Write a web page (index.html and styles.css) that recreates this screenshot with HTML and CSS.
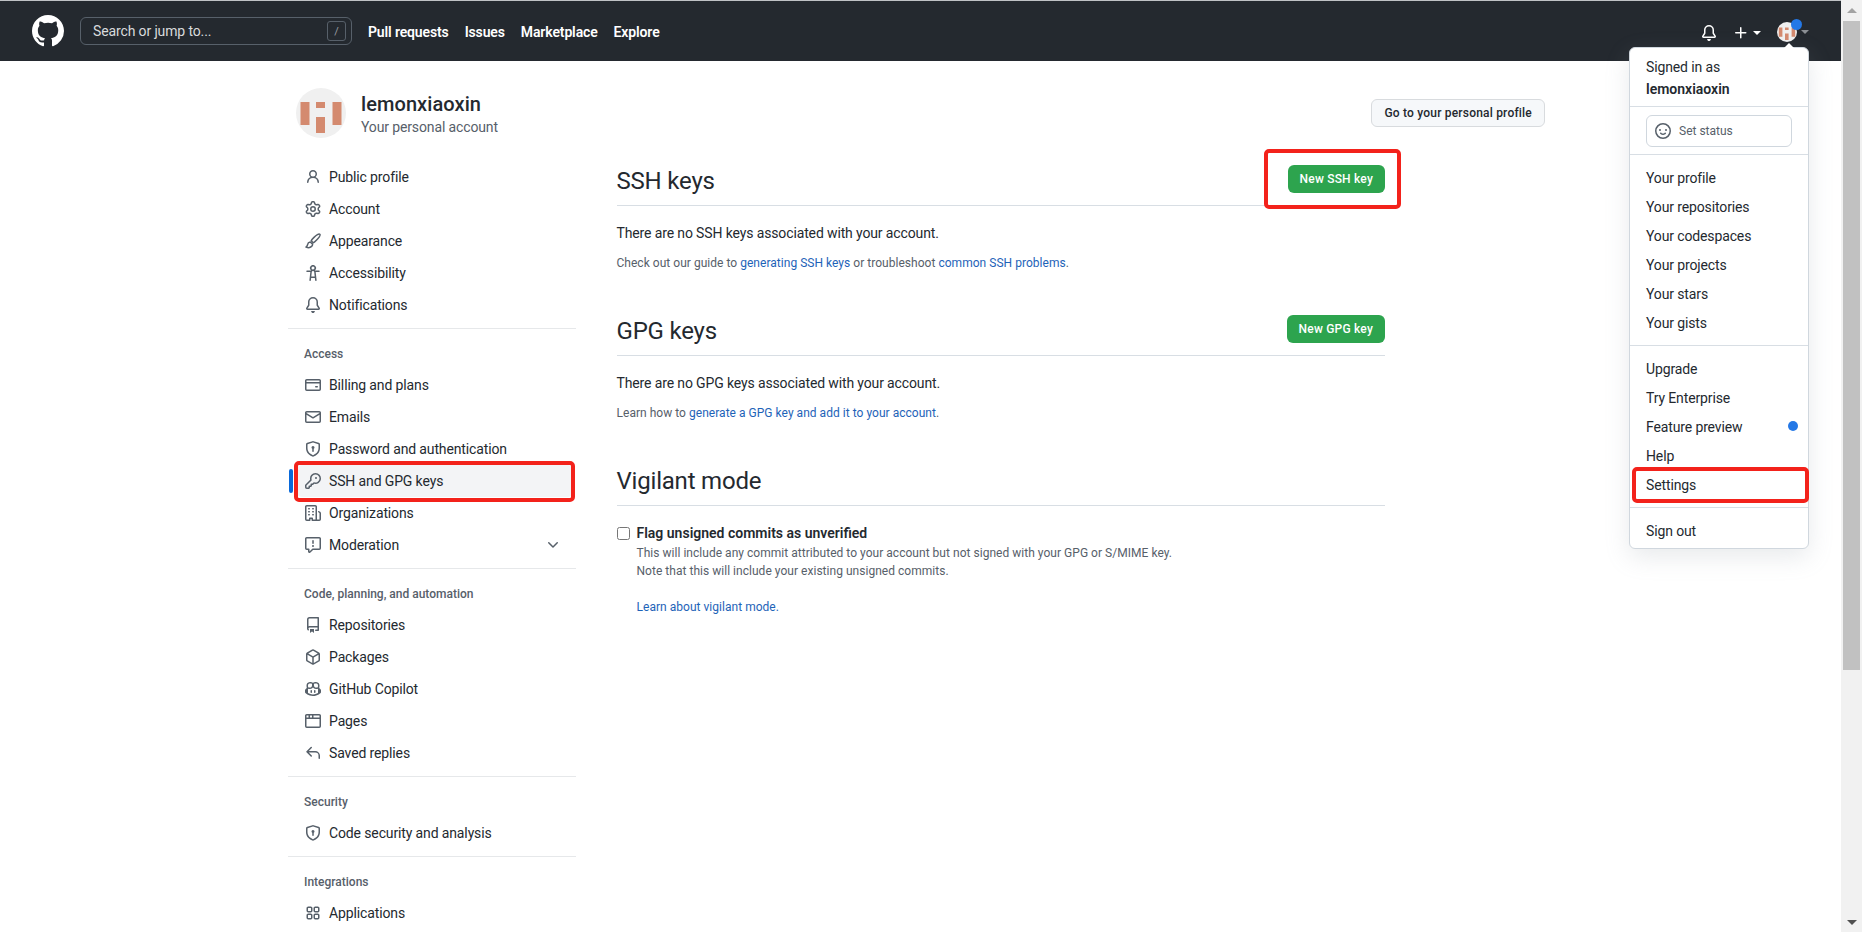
FILE: index.html
```html
<!DOCTYPE html>
<html lang="en">
<head>
    <meta charset="UTF-8">
    <title>SSH and GPG keys</title>
    <link rel="stylesheet" href="styles.css">
</head>
<body>

<svg class="sprite" xmlns="http://www.w3.org/2000/svg">
    <symbol id="i-mark" viewBox="0 0 16 16"><path d="M8 0C3.58 0 0 3.58 0 8c0 3.54 2.29 6.53 5.47 7.59.4.07.55-.17.55-.38 0-.19-.01-.82-.01-1.49-2.01.37-2.53-.49-2.69-.94-.09-.23-.48-.94-.82-1.13-.28-.15-.68-.52-.01-.53.63-.01 1.08.58 1.23.82.72 1.21 1.87.87 2.33.66.07-.52.28-.87.51-1.07-1.78-.2-3.64-.89-3.64-3.95 0-.87.31-1.59.82-2.15-.08-.2-.36-1.02.08-2.12 0 0 .67-.21 2.2.82.64-.18 1.32-.27 2-.27.68 0 1.36.09 2 .27 1.53-1.04 2.2-.82 2.2-.82.44 1.1.16 1.92.08 2.12.51.56.82 1.27.82 2.15 0 3.07-1.87 3.75-3.65 3.95.29.25.54.73.54 1.48 0 1.07-.01 1.93-.01 2.2 0 .21.15.46.55.38A8.013 8.013 0 0016 8c0-4.42-3.58-8-8-8z"/></symbol>
    <symbol id="i-bell" viewBox="0 0 16 16"><path d="M8 16c.9 0 1.7-.6 1.9-1.5.1-.3-.1-.5-.4-.5h-3c-.3 0-.5.2-.4.5.2.9 1 1.5 1.9 1.5ZM3 5a5 5 0 0 1 10 0v2.947c0 .05.015.098.042.139l1.703 2.555A1.519 1.519 0 0 1 13.482 13H2.518a1.516 1.516 0 0 1-1.263-2.36l1.703-2.554A.255.255 0 0 0 3 7.947Zm5-3.5A3.5 3.5 0 0 0 4.5 5v2.947c0 .346-.102.683-.294.97l-1.703 2.556a.017.017 0 0 0-.003.01l.001.006c0 .002.002.004.004.006l.006.004.007.001h10.964l.007-.001.006-.004.004-.006.001-.007a.017.017 0 0 0-.003-.01l-1.703-2.554a1.745 1.745 0 0 1-.294-.97V5A3.5 3.5 0 0 0 8 1.5Z"/></symbol>
    <symbol id="i-plus" viewBox="0 0 16 16"><path d="M7.75 2a.75.75 0 0 1 .75.75V7h4.25a.75.75 0 0 1 0 1.5H8.5v4.25a.75.75 0 0 1-1.5 0V8.5H2.75a.75.75 0 0 1 0-1.5H7V2.75A.75.75 0 0 1 7.75 2Z"/></symbol>
    <symbol id="i-person" viewBox="0 0 16 16"><path d="M10.561 8.073a6.005 6.005 0 0 1 3.432 5.142.75.75 0 1 1-1.498.07 4.5 4.5 0 0 0-8.99 0 .75.75 0 0 1-1.498-.07 6.004 6.004 0 0 1 3.431-5.142 3.999 3.999 0 1 1 5.123 0ZM10.5 5a2.5 2.5 0 1 0-5 0 2.5 2.5 0 0 0 5 0Z"/></symbol>
    <symbol id="i-gear" viewBox="0 0 16 16"><path d="M8 0a8.2 8.2 0 0 1 .701.031C9.444.095 9.99.645 10.16 1.29l.288 1.107c.018.066.079.158.212.224.231.114.454.243.668.386.123.082.233.09.299.071l1.103-.303c.644-.176 1.392.021 1.82.63.27.385.506.792.704 1.218.315.675.111 1.422-.364 1.891l-.814.806c-.049.048-.098.147-.088.294.016.257.016.515 0 .772-.01.147.038.246.088.294l.814.806c.475.469.679 1.216.364 1.891a7.977 7.977 0 0 1-.704 1.217c-.428.61-1.176.807-1.82.63l-1.102-.302c-.067-.019-.177-.011-.3.071a5.909 5.909 0 0 1-.668.386c-.133.066-.194.158-.211.224l-.29 1.106c-.168.646-.715 1.196-1.458 1.26a8.006 8.006 0 0 1-1.402 0c-.743-.064-1.289-.614-1.458-1.26l-.289-1.106c-.018-.066-.079-.158-.212-.224a5.738 5.738 0 0 1-.668-.386c-.123-.082-.233-.09-.299-.071l-1.103.303c-.644.176-1.392-.021-1.82-.63a8.12 8.12 0 0 1-.704-1.218c-.315-.675-.111-1.422.363-1.891l.815-.806c.05-.048.098-.147.088-.294a6.214 6.214 0 0 1 0-.772c.01-.147-.038-.246-.088-.294l-.815-.806C.635 6.045.431 5.298.746 4.623a7.92 7.92 0 0 1 .704-1.217c.428-.61 1.176-.807 1.82-.63l1.102.302c.067.019.177.011.3-.071.214-.143.437-.272.668-.386.133-.066.194-.158.211-.224l.29-1.106C6.009.645 6.556.095 7.299.03 7.53.01 7.764 0 8 0Zm-.571 1.525c-.036.003-.108.036-.137.146l-.289 1.105c-.147.561-.549.967-.998 1.189-.173.086-.34.183-.5.29-.417.278-.97.423-1.529.27l-1.103-.303c-.109-.03-.175.016-.195.045-.22.312-.412.644-.573.99-.014.031-.021.11.059.19l.815.806c.411.406.562.957.53 1.456a4.709 4.709 0 0 0 0 .582c.032.499-.119 1.05-.53 1.456l-.815.806c-.081.08-.073.159-.059.19.162.346.353.677.573.989.02.03.085.076.195.046l1.102-.303c.56-.153 1.113-.008 1.53.27.161.107.328.204.501.29.447.222.85.629.997 1.189l.289 1.105c.029.109.101.143.137.146a6.6 6.6 0 0 0 1.142 0c.036-.003.108-.036.137-.146l.289-1.105c.147-.561.549-.967.998-1.189.173-.086.34-.183.5-.29.417-.278.97-.423 1.529-.27l1.103.303c.109.029.175-.016.195-.045.22-.313.411-.644.573-.99.014-.031.021-.11-.059-.19l-.815-.806c-.411-.406-.562-.957-.53-1.456a4.709 4.709 0 0 0 0-.582c-.032-.499.119-1.05.53-1.456l.815-.806c.081-.08.073-.159.059-.19a6.464 6.464 0 0 0-.573-.989c-.02-.03-.085-.076-.195-.046l-1.102.303c-.56.153-1.113.008-1.53-.27a4.44 4.44 0 0 0-.501-.29c-.447-.222-.85-.629-.997-1.189l-.289-1.105c-.029-.11-.101-.143-.137-.146a6.6 6.6 0 0 0-1.142 0ZM11 8a3 3 0 1 1-6 0 3 3 0 0 1 6 0ZM9.5 8a1.5 1.5 0 1 0-3.001.001A1.5 1.5 0 0 0 9.5 8Z"/></symbol>
    <symbol id="i-brush" viewBox="0 0 16 16"><path fill="none" stroke="currentColor" stroke-width="1.5" stroke-linejoin="round" d="M14.8 1.2c-.9-.9-3.5.9-5.8 3.2C7.5 5.900 6.600 7 6.200 7.800l2 2c.8-.4 1.900-1.300 3.400-2.800 2.300-2.300 4.100-4.900 3.200-5.800Z"/><path fill="none" stroke="currentColor" stroke-width="1.5" stroke-linejoin="round" d="M5.2 9c-1.500.2-2.400 1.200-2.600 2.600-.1.900-.5 1.600-1.600 2.400 1.800.8 4.400.6 5.600-.6.900-.9 1.100-1.900.8-2.600Z"/></symbol>
    <symbol id="i-access" viewBox="0 0 16 16"><path d="M9.923 5.302c.063.063.122.129.178.198H14A.75.75 0 0 1 14 7h-3.3l.578 5.163.362 2.997a.75.75 0 0 1-1.49.18L9.868 13H6.132l-.282 2.34a.75.75 0 0 1-1.49-.18l.362-2.997L5.3 7H2a.75.75 0 0 1 0-1.5h3.9a2.54 2.54 0 0 1 .176-.198 3 3 0 1 1 3.847 0ZM9.2 7.073h-.001a1.206 1.206 0 0 0-2.398 0L6.305 11.5h3.39ZM9.5 3a1.5 1.5 0 1 0-3.001.001A1.5 1.5 0 0 0 9.5 3Z"/></symbol>
    <symbol id="i-card" viewBox="0 0 16 16"><path d="M10.75 9a.75.75 0 0 0 0 1.5h1.5a.75.75 0 0 0 0-1.5h-1.5Z"/><path d="M0 3.75C0 2.784.784 2 1.75 2h12.5c.966 0 1.75.784 1.75 1.75v8.5A1.75 1.75 0 0 1 14.25 14H1.75A1.75 1.75 0 0 1 0 12.25ZM14.5 6.5h-13v5.75c0 .138.112.25.25.25h12.5a.25.25 0 0 0 .25-.25Zm0-2.75a.25.25 0 0 0-.25-.25H1.75a.25.25 0 0 0-.25.25V5h13Z"/></symbol>
    <symbol id="i-mail" viewBox="0 0 16 16"><path d="M1.75 2h12.5c.966 0 1.75.784 1.75 1.75v8.5A1.75 1.75 0 0 1 14.25 14H1.75A1.75 1.75 0 0 1 0 12.25v-8.5C0 2.784.784 2 1.75 2ZM1.5 12.251c0 .138.112.25.25.25h12.5a.25.25 0 0 0 .25-.25V5.809L8.38 9.397a.75.75 0 0 1-.76 0L1.5 5.809v6.442Zm13-8.181v-.32a.25.25 0 0 0-.25-.25H1.75a.25.25 0 0 0-.25.25v.32L8 7.88l6.5-3.81Z"/></symbol>
    <symbol id="i-shield" viewBox="0 0 16 16"><path d="M7.467.133a1.748 1.748 0 0 1 1.066 0l5.25 1.68A1.75 1.75 0 0 1 15 3.48V7c0 1.566-.32 3.182-1.303 4.682-.983 1.498-2.585 2.813-5.032 3.855a1.697 1.697 0 0 1-1.33 0c-2.447-1.042-4.049-2.357-5.032-3.855C1.32 10.182 1 8.566 1 7V3.48a1.75 1.75 0 0 1 1.217-1.667Zm.61 1.429a.25.25 0 0 0-.153 0l-5.25 1.68a.25.25 0 0 0-.174.238V7c0 1.358.275 2.666 1.057 3.86.784 1.194 2.121 2.34 4.366 3.297a.196.196 0 0 0 .154 0c2.245-.956 3.582-2.104 4.366-3.298C13.225 9.666 13.5 8.36 13.5 7V3.48a.251.251 0 0 0-.174-.237l-5.25-1.68ZM9.5 6.5c0 .536-.286 1.032-.75 1.3v2.45a.75.75 0 0 1-1.5 0V7.8A1.5 1.5 0 1 1 9.5 6.5Z"/></symbol>
    <symbol id="i-key" viewBox="0 0 16 16"><path d="M10.5 0a5.499 5.499 0 1 1-1.288 10.848l-.932.932a.749.749 0 0 1-.53.22H7v.75a.749.749 0 0 1-.22.53l-.5.5a.749.749 0 0 1-.53.22H5v.75a.749.749 0 0 1-.22.53l-.5.5a.749.749 0 0 1-.53.22h-2A1.75 1.75 0 0 1 0 14.25v-2c0-.199.079-.389.22-.53l4.932-4.932A5.5 5.5 0 0 1 10.5 0Zm-4 5.5c-.001.431.069.86.205 1.269a.75.75 0 0 1-.181.768L1.5 12.56v1.69c0 .138.112.25.25.25h1.69l.06-.06v-1.19a.75.75 0 0 1 .75-.75h1.19l.06-.06v-1.19a.75.75 0 0 1 .75-.75h1.19l1.023-1.025a.75.75 0 0 1 .768-.18A4 4 0 1 0 6.5 5.5ZM11 6a1 1 0 1 1 0-2 1 1 0 0 1 0 2Z"/></symbol>
    <symbol id="i-org" viewBox="0 0 16 16"><path d="M1.75 16A1.75 1.75 0 0 1 0 14.25V1.75C0 .784.784 0 1.75 0h8.5C11.216 0 12 .784 12 1.75v12.5c0 .085-.006.168-.018.25h2.268a.25.25 0 0 0 .25-.25V8.285a.25.25 0 0 0-.111-.208l-1.055-.703a.749.749 0 1 1 .832-1.248l1.055.703c.487.325.779.871.779 1.456v5.965A1.75 1.75 0 0 1 14.25 16h-3.5a.766.766 0 0 1-.197-.026c-.099.017-.2.026-.303.026h-3a.75.75 0 0 1-.75-.75V14h-1v1.25a.75.75 0 0 1-.75.75Zm-.25-1.75c0 .138.112.25.25.25H4v-1.25a.75.75 0 0 1 .75-.75h2.5a.75.75 0 0 1 .75.75v1.25h2.25a.25.25 0 0 0 .25-.25V1.75a.25.25 0 0 0-.25-.25h-8.5a.25.25 0 0 0-.25.25ZM3.75 6h.5a.75.75 0 0 1 0 1.5h-.5a.75.75 0 0 1 0-1.5ZM3 3.75A.75.75 0 0 1 3.75 3h.5a.75.75 0 0 1 0 1.5h-.5A.75.75 0 0 1 3 3.75Zm4 3A.75.75 0 0 1 7.75 6h.5a.75.75 0 0 1 0 1.5h-.5A.75.75 0 0 1 7 6.75ZM7.75 3h.5a.75.75 0 0 1 0 1.5h-.5a.75.75 0 0 1 0-1.5ZM3 9.75A.75.75 0 0 1 3.75 9h.5a.75.75 0 0 1 0 1.5h-.5A.75.75 0 0 1 3 9.75ZM7.75 9h.5a.75.75 0 0 1 0 1.5h-.5a.75.75 0 0 1 0-1.5Z"/></symbol>
    <symbol id="i-report" viewBox="0 0 16 16"><path d="M0 1.75C0 .784.784 0 1.750 0h12.5C15.216 0 16 .784 16 1.75v9.5A1.75 1.75 0 0 1 14.25 13H8.06l-2.573 2.573A1.458 1.458 0 0 1 3 14.543V13H1.75A1.75 1.75 0 0 1 0 11.25Zm1.75-.25a.25.25 0 0 0-.25.25v9.5c0 .138.112.25.25.25h2a.75.75 0 0 1 .75.75v2.19l2.72-2.72a.749.749 0 0 1 .53-.22h6.5a.25.25 0 0 0 .25-.25v-9.5a.25.25 0 0 0-.25-.25Zm7 2.25v2.5a.75.75 0 0 1-1.5 0v-2.5a.75.75 0 0 1 1.5 0ZM9 9a1 1 0 1 1-2 0 1 1 0 0 1 2 0Z"/></symbol>
    <symbol id="i-chevron" viewBox="0 0 16 16"><path d="M12.78 5.22a.749.749 0 0 1 0 1.06l-4.25 4.25a.749.749 0 0 1-1.06 0L3.22 6.28a.749.749 0 1 1 1.06-1.06L8 8.939l3.72-3.719a.749.749 0 0 1 1.06 0Z"/></symbol>
    <symbol id="i-repo" viewBox="0 0 16 16"><path d="M2 2.5A2.5 2.5 0 0 1 4.5 0h8.75a.75.75 0 0 1 .75.75v12.5a.75.75 0 0 1-.75.75h-2.5a.75.75 0 0 1 0-1.5h1.75v-2h-8a1 1 0 0 0-.714 1.7.75.75 0 1 1-1.072 1.05A2.495 2.495 0 0 1 2 11.5Zm10.5-1h-8a1 1 0 0 0-1 1v6.708A2.486 2.486 0 0 1 4.5 9h8ZM5 12.25a.25.25 0 0 1 .25-.25h3.5a.25.25 0 0 1 .25.25v3.25a.25.25 0 0 1-.4.2l-1.45-1.087a.249.249 0 0 0-.3 0L5.4 15.7a.25.25 0 0 1-.4-.2Z"/></symbol>
    <symbol id="i-package" viewBox="0 0 16 16"><path d="m8.878.392 5.25 3.045c.54.314.872.89.872 1.514v6.098a1.75 1.75 0 0 1-.872 1.514l-5.25 3.045a1.75 1.75 0 0 1-1.756 0l-5.25-3.045A1.75 1.75 0 0 1 1 11.049V4.951c0-.624.332-1.201.872-1.514L7.122.392a1.75 1.75 0 0 1 1.756 0ZM7.875 1.69l-4.63 2.685L8 7.133l4.755-2.758-4.63-2.685a.248.248 0 0 0-.25 0ZM2.5 5.677v5.372c0 .09.047.171.125.216l4.625 2.683V8.432Zm6.25 8.271 4.625-2.683a.25.25 0 0 0 .125-.216V5.677L8.75 8.432Z"/></symbol>
    <symbol id="i-copilot" viewBox="0 0 16 16"><path d="M7.998 15.035c-4.562 0-7.873-2.914-7.998-3.749V9.338c.085-.628.677-1.686 1.588-2.065.013-.07.024-.143.036-.218.029-.183.06-.384.126-.612-.201-.508-.254-1.084-.254-1.656 0-.87.128-1.769.693-2.484.579-.733 1.494-1.124 2.724-1.261 1.206-.134 2.262.034 2.944.765.05.053.096.108.139.165.044-.057.094-.112.143-.165.682-.731 1.738-.899 2.944-.765 1.23.137 2.145.528 2.724 1.261.566.715.693 1.614.693 2.484 0 .572-.053 1.148-.254 1.656.066.228.098.429.126.612.012.076.024.148.037.218.924.385 1.522 1.471 1.591 2.095v1.872c0 .766-3.351 3.795-8.002 3.795Zm0-1.485c2.28 0 4.584-1.11 5.002-1.433V7.862l-.023-.116c-.49.21-1.075.291-1.727.291-1.146 0-2.059-.327-2.71-.991A3.222 3.222 0 0 1 8 6.303a3.24 3.24 0 0 1-.544.743c-.65.664-1.563.991-2.71.991-.652 0-1.236-.081-1.727-.291l-.023.116v4.255c.419.323 2.722 1.433 5.002 1.433ZM6.762 2.83c-.193-.206-.637-.413-1.682-.297-1.019.113-1.479.404-1.713.7-.247.312-.369.789-.369 1.554 0 .793.129 1.171.308 1.371.162.181.519.379 1.442.379.853 0 1.339-.235 1.638-.54.315-.322.527-.827.617-1.553.117-.935-.037-1.395-.241-1.614Zm4.155-.297c-1.044-.116-1.488.091-1.681.297-.204.219-.359.679-.242 1.614.091.726.303 1.231.618 1.553.299.305.784.54 1.638.54.922 0 1.28-.198 1.442-.379.179-.2.308-.578.308-1.371 0-.765-.123-1.242-.37-1.554-.233-.296-.693-.587-1.713-.7Z"/><path d="M6.25 9.037a.75.75 0 0 1 .75.75v1.501a.75.75 0 0 1-1.5 0V9.787a.75.75 0 0 1 .75-.75Zm4.25.75v1.501a.75.75 0 0 1-1.5 0V9.787a.75.75 0 0 1 1.5 0Z"/></symbol>
    <symbol id="i-browser" viewBox="0 0 16 16"><path d="M0 2.75C0 1.784.784 1 1.75 1h12.5c.966 0 1.75.784 1.75 1.75v10.5A1.75 1.75 0 0 1 14.25 15H1.75A1.75 1.75 0 0 1 0 13.25ZM14.5 6h-13v7.25c0 .138.112.25.25.25h12.5a.25.25 0 0 0 .25-.25Zm-6-3.5v2h6V2.75a.25.25 0 0 0-.25-.25ZM5 2.5v2h2v-2Zm-3.25 0a.25.25 0 0 0-.25.25V4.5h2v-2Z"/></symbol>
    <symbol id="i-reply" viewBox="0 0 16 16"><path d="M6.78 1.97a.75.75 0 0 1 0 1.06L3.81 6h6.44A4.75 4.75 0 0 1 15 10.75v2.5a.75.75 0 0 1-1.5 0v-2.5a3.25 3.25 0 0 0-3.25-3.25H3.81l2.97 2.97a.749.749 0 0 1-.326 1.275.749.749 0 0 1-.734-.215L1.47 7.28a.75.75 0 0 1 0-1.06l4.25-4.25a.75.75 0 0 1 1.06 0Z"/></symbol>
    <symbol id="i-apps" viewBox="0 0 16 16"><path d="M1.5 3.25c0-.966.784-1.75 1.75-1.75h2.5c.966 0 1.75.784 1.75 1.75v2.5A1.75 1.75 0 0 1 5.75 7.5h-2.5A1.75 1.75 0 0 1 1.5 5.75Zm7 0c0-.966.784-1.75 1.75-1.75h2.5c.966 0 1.75.784 1.75 1.75v2.5a1.75 1.75 0 0 1-1.75 1.75h-2.5A1.75 1.75 0 0 1 8.5 5.75Zm-7 7c0-.966.784-1.75 1.75-1.75h2.5c.966 0 1.75.784 1.75 1.75v2.5a1.75 1.75 0 0 1-1.75 1.75h-2.5a1.75 1.75 0 0 1-1.75-1.75Zm7 0c0-.966.784-1.75 1.75-1.75h2.5c.966 0 1.75.784 1.75 1.75v2.5a1.75 1.75 0 0 1-1.75 1.75h-2.5a1.75 1.75 0 0 1-1.75-1.75ZM3.25 3a.25.25 0 0 0-.25.25v2.5c0 .138.112.25.25.25h2.5A.25.25 0 0 0 6 5.75v-2.5A.25.25 0 0 0 5.75 3Zm7 0a.25.25 0 0 0-.25.25v2.5c0 .138.112.25.25.25h2.5a.25.25 0 0 0 .25-.25v-2.5a.25.25 0 0 0-.25-.25ZM3.25 10a.25.25 0 0 0-.25.25v2.5c0 .138.112.25.25.25h2.5a.25.25 0 0 0 .25-.25v-2.5a.25.25 0 0 0-.25-.25Zm7 0a.25.25 0 0 0-.25.25v2.5c0 .138.112.25.25.25h2.5a.25.25 0 0 0 .25-.25v-2.5a.25.25 0 0 0-.25-.25Z"/></symbol>
    <symbol id="i-smiley" viewBox="0 0 16 16"><path d="M8 0a8 8 0 1 1 0 16A8 8 0 0 1 8 0ZM1.5 8a6.5 6.5 0 1 0 13 0 6.5 6.5 0 0 0-13 0Zm3.82 1.636a.75.75 0 0 1 1.038.175l.007.009c.103.118.22.222.35.31.264.178.683.37 1.285.37.602 0 1.02-.192 1.285-.371.13-.088.247-.192.35-.31l.007-.008a.75.75 0 0 1 1.222.87c-.02.028-.1.13-.199.232-.16.166-.338.316-.53.445-.63.418-1.37.638-2.127.629-.946 0-1.652-.308-2.126-.63a3.331 3.331 0 0 1-.715-.657.75.75 0 0 1 .153-1.094ZM12 7a1 1 0 1 1-2 0 1 1 0 0 1 2 0ZM5 8a1 1 0 1 1 0-2 1 1 0 0 1 0 2Z"/></symbol>
    <symbol id="i-avatar" viewBox="0 0 50 50">
        <circle cx="25" cy="25" r="25" fill="#f0f0f0"/>
        <path fill="#d48a6f" d="M4.5 14h9v23h-9zM20 14h9v6h-9zM20 29h9v16h-9zM36.500 14h9v23h-9z"/>
    </symbol>
</svg>

<div class="window">
    <div class="page">
        <header class="topbar">
            <svg class="topbar-logo"><use href="#i-mark"/></svg>
            <div class="search">
                <span>Search or jump to...</span>
                <span class="search-key">/</span>
            </div>
            <nav class="topnav">
                <a>Pull requests</a>
                <a>Issues</a>
                <a>Marketplace</a>
                <a>Explore</a>
            </nav>
            <div class="topbar-right">
                <svg class="icon-16 topbar-low"><use href="#i-bell"/></svg>
                <div class="topbar-menu topbar-low">
                    <svg class="icon-16"><use href="#i-plus"/></svg>
                    <span class="caret"></span>
                </div>
                <div class="topbar-menu">
                    <div class="user-pic">
                        <svg class="user-pic-img"><use href="#i-avatar"/></svg>
                        <span class="user-dot"></span>
                    </div>
                    <span class="caret caret-dim"></span>
                </div>
            </div>
        </header>

        <div class="container">
            <div class="account">
                <div class="account-who">
                    <svg class="account-pic"><use href="#i-avatar"/></svg>
                    <div class="account-text">
                        <div class="account-name">lemonxiaoxin</div>
                        <div class="account-sub">Your personal account</div>
                    </div>
                </div>
                <a class="btn">Go to your personal profile</a>
            </div>

            <div class="columns">
                <aside class="sidebar">
                    <a class="side-item"><svg class="icon-16"><use href="#i-person"/></svg>Public profile</a>
                    <a class="side-item"><svg class="icon-16"><use href="#i-gear"/></svg>Account</a>
                    <a class="side-item"><svg class="icon-16"><use href="#i-brush"/></svg>Appearance</a>
                    <a class="side-item"><svg class="icon-16"><use href="#i-access"/></svg>Accessibility</a>
                    <a class="side-item"><svg class="icon-16"><use href="#i-bell"/></svg>Notifications</a>
                    <div class="side-rule"></div>
                    <div class="side-title">Access</div>
                    <a class="side-item"><svg class="icon-16"><use href="#i-card"/></svg>Billing and plans</a>
                    <a class="side-item"><svg class="icon-16"><use href="#i-mail"/></svg>Emails</a>
                    <a class="side-item"><svg class="icon-16"><use href="#i-shield"/></svg>Password and authentication</a>
                    <a class="side-item active"><svg class="icon-16"><use href="#i-key"/></svg>SSH and GPG keys<span class="red-box"></span></a>
                    <a class="side-item"><svg class="icon-16"><use href="#i-org"/></svg>Organizations</a>
                    <a class="side-item"><svg class="icon-16"><use href="#i-report"/></svg>Moderation<svg class="icon-16 side-chevron"><use href="#i-chevron"/></svg></a>
                    <div class="side-rule"></div>
                    <div class="side-title">Code, planning, and automation</div>
                    <a class="side-item"><svg class="icon-16"><use href="#i-repo"/></svg>Repositories</a>
                    <a class="side-item"><svg class="icon-16"><use href="#i-package"/></svg>Packages</a>
                    <a class="side-item"><svg class="icon-16"><use href="#i-copilot"/></svg>GitHub Copilot</a>
                    <a class="side-item"><svg class="icon-16"><use href="#i-browser"/></svg>Pages</a>
                    <a class="side-item"><svg class="icon-16"><use href="#i-reply"/></svg>Saved replies</a>
                    <div class="side-rule"></div>
                    <div class="side-title">Security</div>
                    <a class="side-item"><svg class="icon-16"><use href="#i-shield"/></svg>Code security and analysis</a>
                    <div class="side-rule"></div>
                    <div class="side-title">Integrations</div>
                    <a class="side-item"><svg class="icon-16"><use href="#i-apps"/></svg>Applications</a>
                </aside>

                <main class="content">
                    <section class="block">
                        <div class="block-head">
                            <h2>SSH keys</h2>
                            <a class="btn-green">New SSH key<span class="red-box"></span></a>
                        </div>
                        <p class="lead">There are no SSH keys associated with your account.</p>
                        <p class="note">Check out our guide to <a class="link">generating SSH keys</a> or troubleshoot <a class="link">common SSH problems</a>.</p>
                    </section>
                    <section class="block">
                        <div class="block-head">
                            <h2>GPG keys</h2>
                            <a class="btn-green">New GPG key</a>
                        </div>
                        <p class="lead">There are no GPG keys associated with your account.</p>
                        <p class="note">Learn how to <a class="link">generate a GPG key and add it to your account</a>.</p>
                    </section>
                    <section class="block">
                        <div class="block-head">
                            <h2>Vigilant mode</h2>
                        </div>
                        <label class="check">
                            <input type="checkbox">
                            <strong>Flag unsigned commits as unverified</strong>
                        </label>
                        <div class="check-note">
                            This will include any commit attributed to your account but not signed with your GPG or S/MIME key.<br>
                            Note that this will include your existing unsigned commits.<br>
                            <br>
                            <a class="link">Learn about vigilant mode.</a>
                        </div>
                    </section>
                </main>
            </div>
        </div>

        <div class="dropdown">
            <div class="drop-who">
                <div>Signed in as</div>
                <strong>lemonxiaoxin</strong>
            </div>
            <div class="drop-status">
                <div class="status-btn"><svg class="icon-16"><use href="#i-smiley"/></svg>Set status</div>
            </div>
            <div class="drop-list">
                <a>Your profile</a>
                <a>Your repositories</a>
                <a>Your codespaces</a>
                <a>Your projects</a>
                <a>Your stars</a>
                <a>Your gists</a>
            </div>
            <div class="drop-list">
                <a>Upgrade</a>
                <a>Try Enterprise</a>
                <a class="drop-feature">Feature preview<span class="feature-dot"></span></a>
                <a>Help</a>
                <a class="drop-settings">Settings<span class="red-box"></span></a>
            </div>
            <div class="drop-list drop-last">
                <a>Sign out</a>
            </div>
        </div>
    </div>

    <div class="scrollbar">
        <span class="scroll-up"></span>
        <div class="scroll-track"><div class="scroll-thumb"></div></div>
        <span class="scroll-down"></span>
    </div>
</div>

</body>
</html>
```
FILE: styles.css
```css
* {
    box-sizing: border-box;
}

body {
    margin: 0;
    height: 100vh;
    overflow: hidden;
    font-family: Roboto, "Liberation Sans", sans-serif;
    font-size: 14px;
    line-height: 21px;
    letter-spacing: -.13px;
    color: #24292f;
    background: #fff;
}

h2, p {
    margin: 0;
    font-weight: 400;
}

strong {
    font-weight: 600;
    letter-spacing: 0;
}

.sprite {
    display: none;
}

.icon-16 {
    width: 16px;
    height: 16px;
    flex: none;
    fill: currentColor;
}

.window {
    display: flex;
    height: 100%;
}

.page {
    position: relative;
    flex: 1;
    min-width: 0;
    overflow: hidden;
}

/* top bar */
.topbar {
    display: flex;
    align-items: center;
    height: 61px;
    padding: 0 32px;
    border-top: 1px solid #bfc2c5;
    background: #24292f;
    color: #fff;
}

.topbar-logo {
    width: 32px;
    height: 32px;
    fill: #fff;
    margin-right: 16px;
}

.search {
    display: flex;
    align-items: center;
    justify-content: space-between;
    width: 272px;
    height: 28px;
    padding: 0 5px 0 12px;
    border: 1px solid #57606a;
    border-radius: 6px;
    color: #d8dadc;
    margin-right: 16px;
}

.search-key {
    display: flex;
    align-items: center;
    justify-content: center;
    width: 19px;
    height: 20px;
    border: 1px solid #57606a;
    border-radius: 3px;
    font-size: 11px;
    color: #9a9ea3;
}

.topnav {
    display: flex;
    gap: 16px;
    padding-top: 2px;
    font-weight: 600;
}

.topbar-right {
    display: flex;
    align-items: center;
    gap: 16px;
    margin-left: auto;
    padding-top: 2px;
}

.topbar-low {
    margin-top: 2px;
}

.topbar-menu {
    display: flex;
    align-items: center;
    gap: 4px;
}

.caret {
    width: 0;
    height: 0;
    border: 4px solid transparent;
    border-top-color: #fff;
    border-bottom-width: 0;
}

.caret-dim {
    border-top-color: #8b8f94;
}

.user-pic {
    position: relative;
    width: 20px;
    height: 20px;
}

.user-pic-img {
    display: block;
    width: 20px;
    height: 20px;
}

.user-dot {
    position: absolute;
    top: -3px;
    right: -5px;
    width: 11px;
    height: 11px;
    border-radius: 50%;
    background: #2478e6;
}

/* account heading */
.container {
    width: 1281px;
    margin-left: 280px;
    padding: 27px 16px 0;
}

.account {
    display: flex;
    align-items: flex-start;
    justify-content: space-between;
}

.account-who {
    display: flex;
    align-items: center;
    gap: 15px;
}

.account-pic {
    display: block;
    width: 50px;
    height: 50px;
}

.account-text {
    padding-top: 2px;
}

.account-name {
    font-size: 20px;
    line-height: 26px;
    font-weight: 500;
    letter-spacing: .08px;
}

.account-sub {
    color: #57606a;
    line-height: 20px;
}

.btn {
    margin-top: 11px;
    height: 28px;
    padding: 0 12px;
    border: 1px solid #d8dbde;
    border-radius: 6px;
    background: #f6f8fa;
    font-size: 12px;
    font-weight: 500;
    line-height: 26px;
    letter-spacing: .2px;
}

/* sidebar + content */
.columns {
    display: flex;
    margin-top: 23px;
}

.sidebar {
    width: 288px;
    margin-left: -8px;
    flex: none;
}

.side-item {
    position: relative;
    display: flex;
    align-items: center;
    gap: 8px;
    height: 32px;
    margin-left: 8px;
    padding-left: 9px;
    padding-right: 8px;
    border-radius: 6px;
}

.side-item .icon-16 {
    color: #57606a;
}

.side-item.active {
    margin-right: 2px;
    background: #f3f4f6;
}

.side-item.active::before {
    content: "";
    position: absolute;
    left: -7px;
    top: 4px;
    width: 4px;
    height: 24px;
    border-radius: 6px;
    background: #0969da;
}

.side-chevron {
    margin-left: auto;
    margin-right: 7px;
}

.side-rule {
    height: 1px;
    margin-top: 7px;
    background: #e6e8ea;
}

.side-title {
    padding: 16px 0 6px 16px;
    font-size: 12px;
    line-height: 18px;
    font-weight: 500;
    letter-spacing: 0;
    color: #57606a;
}

.content {
    width: 768.5px;
    margin-left: 40.5px;
    padding-top: 1px;
}

.block {
    margin-bottom: 40px;
}

.block-head {
    display: flex;
    align-items: flex-start;
    justify-content: space-between;
    padding-bottom: 6px;
    border-bottom: 1px solid #d8dee4;
}

.block-head h2 {
    margin-top: 1px;
    font-size: 24px;
    line-height: 36px;
    letter-spacing: -.2px;
}

.btn-green {
    position: relative;
    margin-top: 3px;
    height: 28px;
    padding: 0 12px;
    border-radius: 6px;
    background: #2da44e;
    color: #fff;
    font-size: 12px;
    font-weight: 500;
    line-height: 28px;
    letter-spacing: .2px;
}

.lead {
    margin-top: 17px;
}

.note {
    margin-top: 10px;
    font-size: 12px;
    line-height: 18px;
    letter-spacing: .03px;
    color: #57606a;
}

.link {
    color: #1e63b8;
}

.check {
    display: flex;
    align-items: center;
    gap: 7px;
    margin-top: 17px;
}

.check input {
    width: 13px;
    height: 13px;
    margin: 0;
}

.check-note {
    margin-left: 20px;
    font-size: 12px;
    line-height: 18px;
    letter-spacing: .03px;
    color: #57606a;
}

/* red marks drawn over the screenshot */
.red-box {
    position: absolute;
    border: 4px solid #f3221b;
    border-radius: 5px;
    pointer-events: none;
}

.side-item .red-box {
    left: -2px;
    right: -1px;
    top: -4px;
    bottom: -5px;
}

.btn-green .red-box {
    left: -24px;
    right: -16px;
    top: -16px;
    bottom: -16px;
}

.drop-settings .red-box {
    left: 2px;
    right: -1px;
    top: -3px;
    bottom: -4px;
}

/* user menu */
.dropdown {
    position: absolute;
    top: 47px;
    right: 32px;
    width: 180px;
    height: 502px;
    border: 1px solid #d0d7de;
    border-radius: 6px;
    background: #fff;
    box-shadow: 0 8px 24px rgba(140, 149, 159, .2);
}

.dropdown::before {
    content: "";
    position: absolute;
    top: -5px;
    right: 14px;
    border: 5px solid transparent;
    border-top-width: 0;
    border-bottom-color: #fff;
}

.drop-who {
    padding: 8px 16px 6px;
    line-height: 22px;
    border-bottom: 1px solid #d8dee4;
}

.drop-status {
    padding: 8px 16px 7px;
    border-bottom: 1px solid #d8dee4;
}

.status-btn {
    display: flex;
    align-items: center;
    gap: 8px;
    height: 32px;
    padding: 0 8px;
    border: 1px solid #d0d7de;
    border-radius: 6px;
    font-size: 12px;
    letter-spacing: 0;
    color: #57606a;
}

.drop-list {
    padding: 8px 0;
    border-bottom: 1px solid #d8dee4;
}

.drop-list a {
    position: relative;
    display: block;
    height: 29px;
    padding: 5px 16px 3px;
}

.drop-last {
    padding-bottom: 0;
    border-bottom: 0;
}

.feature-dot {
    position: absolute;
    right: 10px;
    top: 9px;
    width: 10px;
    height: 10px;
    border-radius: 50%;
    background: #2478e6;
}

/* browser scrollbar */
.scrollbar {
    position: relative;
    display: flex;
    flex-direction: column;
    align-items: center;
    width: 21px;
    flex: none;
    background: #f1f1f1;
    padding-bottom: 7px;
}

.scroll-track {
    flex: 1;
    width: 100%;
    padding-left: 2px;
    padding-right: 2px;
}

.scroll-thumb {
    height: 649px;
    background: #c1c1c1;
}

.scroll-up, .scroll-down {
    width: 0;
    height: 0;
    border: 4px solid transparent;
    border-left-width: 5px;
    border-right-width: 5px;
}

.scroll-up {
    margin: 8px 0 8px;
    border-top-width: 0;
    border-bottom: 5px solid #a3a3a3;
}

.scroll-down {
    border-bottom-width: 0;
    border-top: 5px solid #505050;
}
```
